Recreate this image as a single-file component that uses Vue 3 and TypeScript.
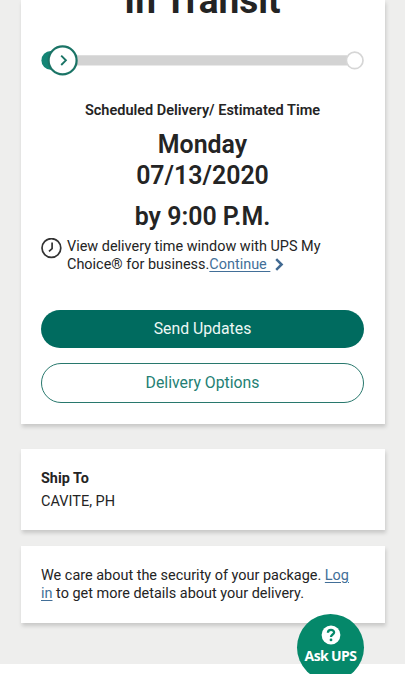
<script setup lang="ts">
const destination: string = 'CAVITE, PH'
const deliveryDay: string = 'Monday'
const deliveryDate: string = '07/13/2020'
</script>

<template>
  <div class="page">
    <main class="content">
      <section class="card status">
        <h1>In Transit</h1>
        <svg class="progress" width="323" height="32" viewBox="0 0 323 32">
          <path d="M20 16.4H306" stroke="#d3d3d3" stroke-width="10.4" />
          <circle cx="313.7" cy="16.4" r="8.3" fill="#fff" stroke="#d6d6d6" stroke-width="1.7" />
          <circle cx="9.7" cy="16.4" r="9.3" fill="#148575" />
          <circle cx="21.6" cy="16.4" r="14" fill="#fff" stroke="#1b7466" stroke-width="2.2" />
          <path d="M20.2 11.6L24.9 16.3L20.2 21" fill="none" stroke="#1b7466" stroke-width="1.9" />
        </svg>
        <p class="label">Scheduled Delivery/ Estimated Time</p>
        <h2>{{ deliveryDay }}</h2>
        <h2>{{ deliveryDate }}</h2>
        <h2 class="by">by 9:00 P.M.</h2>
        <div class="window">
          <svg class="clock" width="22" height="22" viewBox="0 0 22 22" fill="none" stroke="#333">
            <circle cx="10.4" cy="10" r="9.4" stroke-width="1.7" />
            <path d="M11.1 4.6V10.6L8 13.4" stroke-width="1.7" />
          </svg>
          <p>View delivery time window with UPS My<br>Choice® for business.<a>Continue&nbsp;</a><svg class="chevron" width="9" height="13" viewBox="0 0 9 13"><path d="M1.2 1.2L6.6 6.5L1.2 11.8" fill="none" stroke="#426a92" stroke-width="2.5" /></svg></p>
        </div>
        <button class="primary">Send Updates</button>
        <button class="secondary">Delivery Options</button>
      </section>
      <section class="card ship">
        <h3>Ship To</h3>
        <p>{{ destination }}</p>
      </section>
      <section class="card security">
        <p>We care about the security of your package. <a>Log</a><br><a>in</a> to get more details about your delivery.</p>
      </section>
    </main>
    <button class="ask">
      <svg width="20" height="20" viewBox="0 0 20 20">
        <circle cx="10" cy="10" r="9.4" fill="#fff" />
        <path d="M6.9 7.7C7 3.8 13.2 4.1 13.1 7.5C13 9.5 10 9.6 10 12" fill="none" stroke="#05886a" stroke-width="2.3" />
        <circle cx="10" cy="14.9" r="1.4" fill="#05886a" />
      </svg>
      <span>Ask UPS</span>
    </button>
  </div>
</template>

<style>
body { background: #fff; }
</style>

<style scoped>
.page {
  position: relative;
  height: 674px;
  overflow: hidden;
  font-family: Roboto, "Liberation Sans", sans-serif;
  font-size: 14.45px;
  line-height: 18px;
  color: #242424;
}
.content {
  box-sizing: border-box;
  height: 664px;
  padding: 0 20px 0 21px;
  background: #eeeeed;
}
h1, h2, h3, p { margin: 0; }
.card {
  box-sizing: border-box;
  padding: 0 21px 0 20px;
  background: #fff;
  box-shadow: 1px 3px 4px rgba(0, 0, 0, .16);
}
.status { display: flow-root; height: 424px; }
h1 {
  margin-top: -19px;
  font-size: 37px;
  line-height: 40px;
  text-align: center;
}
.progress { display: block; margin-top: 23px; }
.label {
  margin-top: 25px;
  font-size: 14.5px;
  font-weight: 600;
  line-height: 20px;
  text-align: center;
}
h2 {
  font-size: 24.9px;
  font-weight: 600;
  line-height: 31px;
  text-align: center;
}
.label + h2 { margin-top: 8px; }
.by { margin-top: 10px; }
.window { display: flex; height: 36px; margin-top: 6px; }
.window p { white-space: nowrap; }
.clock { flex: none; width: 22px; margin-right: 4px; }
.chevron { margin-left: 5px; vertical-align: -2px; }
a { color: #426f98; text-decoration: underline; text-underline-offset: 2px; }
button {
  display: block;
  box-sizing: border-box;
  width: 323px;
  padding: 0;
  border: 0;
  border-radius: 20px;
  font: 400 15.8px/20px Roboto, "Liberation Sans", sans-serif;
}
.primary { height: 38px; margin-top: 36px; background: #006b5f; color: #edf8f5; }
.secondary {
  height: 40px;
  margin-top: 15px;
  border: 1px solid #28786d;
  background: #fff;
  color: #247f74;
}
.ship { height: 81px; margin-top: 25px; padding-top: 20px; }
.ship h3 { font-size: 14.4px; line-height: 20px; }
.ship p { margin-top: 4px; font-size: 14.5px; }
.security { height: 77px; margin-top: 16px; padding-top: 21px; white-space: nowrap; }
.ask {
  position: absolute;
  top: 614px;
  left: 297px;
  display: flex;
  flex-direction: column;
  align-items: center;
  width: 67px;
  height: 67px;
  padding-top: 11px;
  border-radius: 50%;
  background: #05886a;
  color: #fff;
  font: 700 14px/18px "Open Sans", sans-serif;
}
.ask svg { flex: none; }
.ask span { margin-top: 2px; white-space: nowrap; letter-spacing: -.6px; }
</style>
